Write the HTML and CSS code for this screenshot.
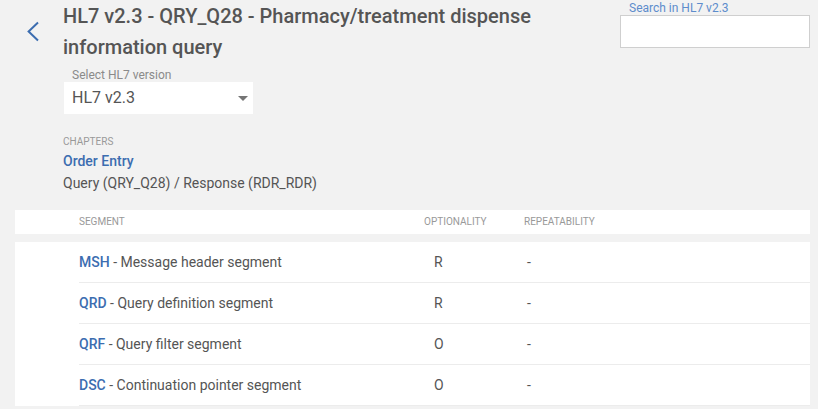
FILE: index.html
```html
<!DOCTYPE html>
<html lang="en">
<head>
<meta charset="utf-8">
<title>HL7 v2.3 - QRY_Q28</title>
<link rel="stylesheet" href="styles.css">
</head>
<body>
<div class="page">
  <div class="top">
    <div class="head">
      <a class="back" href="#" aria-label="Back">
        <svg width="12" height="21" viewBox="0 0 12 21"><polyline points="11,1.5 1.6,10.5 11,19.5" fill="none" stroke="#3c6db0" stroke-width="2"/></svg>
      </a>
      <div class="head-main">
        <h1 class="title">HL7 v2.3 - QRY_Q28 - Pharmacy/treatment dispense information query</h1>
        <div class="field">
          <div class="field-label">Select HL7 version</div>
          <div class="select">
            <span class="select-value">HL7 v2.3</span>
            <span class="caret"></span>
          </div>
        </div>
      </div>
    </div>
    <div class="search">
      <div class="search-label">Search in HL7 v2.3</div>
      <div class="search-input"></div>
    </div>
  </div>

  <div class="chapters">
    <div class="chapters-label">CHAPTERS</div>
    <a class="chapter-link" href="#">Order Entry</a>
    <div class="chapter-sub">Query (QRY_Q28) / Response (RDR_RDR)</div>
  </div>

  <div class="table">
    <div class="thead">
      <div class="cols">
        <div>SEGMENT</div>
        <div>OPTIONALITY</div>
        <div>REPEATABILITY</div>
      </div>
    </div>
    <div class="tbody">
      <div class="cols row">
        <div><a class="code" href="#">MSH</a> - Message header segment</div>
        <div class="opt">R</div>
        <div class="rep">-</div>
      </div>
      <div class="cols row">
        <div><a class="code" href="#">QRD</a> - Query definition segment</div>
        <div class="opt">R</div>
        <div class="rep">-</div>
      </div>
      <div class="cols row">
        <div><a class="code" href="#">QRF</a> - Query filter segment</div>
        <div class="opt">O</div>
        <div class="rep">-</div>
      </div>
      <div class="cols row">
        <div><a class="code" href="#">DSC</a> - Continuation pointer segment</div>
        <div class="opt">O</div>
        <div class="rep">-</div>
      </div>
    </div>
  </div>
</div>
</body>
</html>
```

FILE: styles.css
```css
html, body {
  margin: 0;
  padding: 0;
  background: #f2f2f2;
}
body {
  font-family: Roboto, "Liberation Sans", Arial, sans-serif;
  color: #555;
  width: 818px;
  height: 409px;
  overflow: hidden;
}
a { text-decoration: none; }

.top {
  display: flex;
  justify-content: space-between;
  align-items: flex-start;
}
.head {
  display: flex;
  align-items: flex-start;
}
.back {
  display: block;
  width: 12px;
  height: 21px;
  margin: 21px 24px 0 27px;
}
.back svg { display: block; }

.title {
  margin: 1px 0 0 0;
  max-width: 520px;
  font-size: 20px;
  line-height: 31px;
  font-weight: 500;
  color: #555;
}

.field {
  margin: 5px 0 0 1px;
  width: 189px;
}
.field-label {
  padding-left: 8px;
  font-size: 12px;
  line-height: 14px;
  color: #8a8a8a;
}
.select {
  display: flex;
  align-items: center;
  justify-content: space-between;
  height: 32px;
  background: #fff;
  padding: 0 5px 0 8px;
}
.select-value {
  font-size: 16px;
  line-height: 32px;
  color: #555;
}
.caret {
  width: 0;
  height: 0;
  border-left: 5px solid transparent;
  border-right: 5px solid transparent;
  border-top: 5px solid #757575;
  margin-top: 1px;
}

.search {
  margin: 2px 8px 0 0;
  width: 190px;
}
.search-label {
  padding-left: 9px;
  font-size: 12px;
  line-height: 13px;
  color: #5d8ccc;
}
.search-input {
  height: 31px;
  background: #fff;
  border: 1px solid #cfcfcf;
}

.chapters {
  padding-left: 63px;
  margin-top: 22px;
}
.chapters-label {
  font-size: 10px;
  line-height: 12px;
  color: #999;
  margin-bottom: 2px;
}
.chapter-link {
  display: block;
  font-size: 14px;
  line-height: 22px;
  font-weight: 500;
  color: #3c6db0;
}
.chapter-sub {
  font-size: 14px;
  line-height: 22px;
  color: #555;
}

.table {
  margin: 16px 8px 0 15px;
}
.cols {
  display: grid;
  grid-template-columns: 345px 100px 1fr;
}
.thead {
  background: #fff;
  padding-left: 64px;
  height: 24px;
  font-size: 10px;
  line-height: 24px;
  color: #999;
}
.tbody {
  margin-top: 8px;
  background: #fff;
}
.row {
  margin-left: 64px;
  height: 40px;
  line-height: 40px;
  font-size: 14px;
  color: #555;
  border-bottom: 1px solid #ececec;
}
.code {
  font-weight: 500;
  color: #3c6db0;
}
.opt { padding-left: 10px; }
.rep { padding-left: 3px; }
```
